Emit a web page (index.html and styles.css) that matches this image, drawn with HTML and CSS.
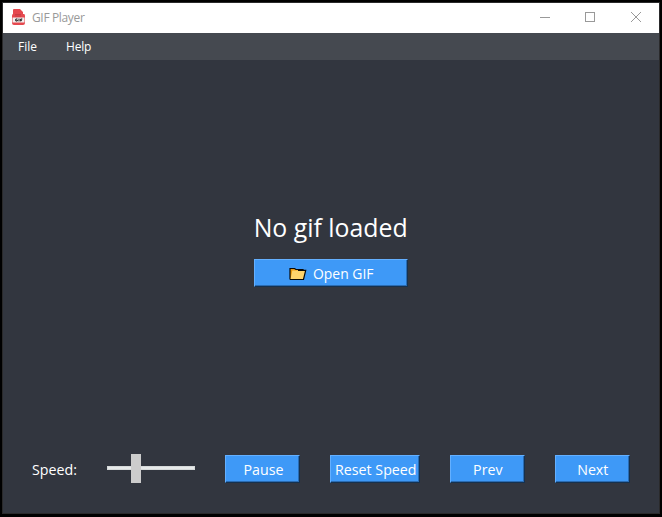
FILE: index.html
```html
<!DOCTYPE html>
<html lang="en">
<head>
<meta charset="utf-8">
<title>GIF Player</title>
<link rel="stylesheet" href="styles.css">
</head>
<body>
<div class="window">
  <header class="titlebar">
    <svg class="app-icon" width="14" height="16" viewBox="0 0 14 16">
      <path d="M2 0H8L11 3V5H12Q13 5 13 7V14Q13 16 11 16H2Q0 16 0 14V7Q0 5 1 5V1Q1 0 2 0Z" fill="#e5484e"/>
      <path d="M3 5.5H9M3 7H9" fill="none" stroke="#bd3940" stroke-width="0.7"/>
      <rect x="0.5" y="8.5" width="12" height="5" fill="#f3eeee"/>
      <path d="M5.5 10H3.8V12H5.3V11M7 9.6V12.4M8.7 12.4V10H10.3M8.7 11.2H10" fill="none" stroke="#161616"/>
    </svg>
    <span class="title">GIF Player</span>
    <svg class="controls" width="104" height="12" viewBox="0 0 104 12" fill="none" stroke="#999" shape-rendering="crispEdges">
      <path d="M1 5.5H11"/>
      <rect x="46.5" y="0.5" width="9" height="9"/>
      <path d="M92 0L102 10M102 0L92 10" shape-rendering="auto"/>
    </svg>
  </header>
  <nav class="menu"><span class="file">File</span><span class="help">Help</span></nav>
  <main class="viewer">
    <h1>No gif loaded</h1>
    <button class="open">
      <svg width="18" height="14" viewBox="0 0 18 14" stroke="#080808" stroke-linejoin="miter">
        <path d="M1 12.5V1.5H5.5L7 2.5H14V4" fill="#ed9b12" stroke-width="1.2"/>
        <path d="M1.5 12.5L3.3 3.5H16.7L14.5 12.5Z" fill="#ffd36c" stroke="none"/>
        <path d="M1 12.5H14.5L16.7 3.3H9" fill="none" stroke-width="1.2"/>
      </svg>
      <span>Open GIF</span>
    </button>
  </main>
  <footer class="toolbar">
    <span class="speed">Speed:</span>
    <div class="slider"><i class="track"></i><i class="thumb"></i></div>
    <button class="pause"><span>Pause</span></button>
    <button class="reset"><span>Reset Speed</span></button>
    <button class="prev"><span>Prev</span></button>
    <button class="next"><span>Next</span></button>
  </footer>
</div>
</body>
</html>
```
FILE: styles.css
```css
* { box-sizing: border-box; }
body {
  margin: 0;
  padding: 2px;
  height: 517px;
  background: #000;
  font-family: "Open Sans", "Noto Sans", sans-serif;
  color: #fff;
  overflow: hidden;
}
.window {
  width: 658px;
  height: 512px;
  border: 1px solid #2a2a2b;
  background: #32363f;
  display: flex;
  flex-direction: column;
}
.titlebar {
  height: 30px;
  background: #fff;
  display: flex;
  align-items: center;
  padding: 0 16px 0 9px;
}
.app-icon { margin: 0 6px 2px 0; }
.title { font-size: 12px; line-height: 16px; color: #999; letter-spacing: -0.35px; }
.controls { margin-left: auto; }
.menu {
  height: 27px;
  background: #454950;
  display: flex;
  align-items: center;
  padding-left: 15px;
  gap: 30px;
  font-size: 12px;
  line-height: 16px;
}
.file { width: 18px; }
.help { letter-spacing: -0.2px; }
.viewer {
  height: 380px;
  padding-top: 150px;
  display: flex;
  flex-direction: column;
  align-items: center;
}
h1 {
  margin: 0;
  font-size: 26px;
  line-height: 34px;
  font-weight: 400;
  white-space: nowrap;
  transform: scaleX(0.955);
}
button {
  height: 28px;
  width: 75px;
  padding: 0 0 0 1px;
  border: 1px solid;
  border-color: #64b0ff #15314f #15314f #64b0ff;
  box-shadow: inset -1px -1px #2b6cb2;
  background: #3e99f7;
  color: #fff;
  font: 15.3px/20px "Open Sans", "Noto Sans", sans-serif;
  display: flex;
  align-items: center;
  justify-content: center;
  white-space: nowrap;
}
button span { transform: scaleX(0.93); }
.open { width: 154px; margin-top: 15px; gap: 6px; }
.open svg { margin: 2px -1px 0 1px; }
.open span { margin: 0 -2px 0 -2px; transform: scaleX(0.91); }
.toolbar { height: 73px; padding: 14px 0 0 29px; display: flex; }
.speed {
  width: 75px;
  flex: none;
  font-size: 15.3px;
  line-height: 31px;
  transform: scaleX(0.93);
  transform-origin: left;
}
.slider {
  width: 88px;
  height: 29px;
  flex: none;
  display: grid;
  align-items: start;
  margin-right: 30px;
}
.slider i { grid-area: 1 / 1; }
.track { height: 4px; margin-top: 12px; background: #e7eaea; border: 1px solid #d6dada; }
.thumb { width: 10px; height: 29px; margin-left: 24px; background: #ccc; }
.toolbar button { margin-top: 1px; margin-right: 30px; flex: none; }
.toolbar .reset { width: 90px; }
```
